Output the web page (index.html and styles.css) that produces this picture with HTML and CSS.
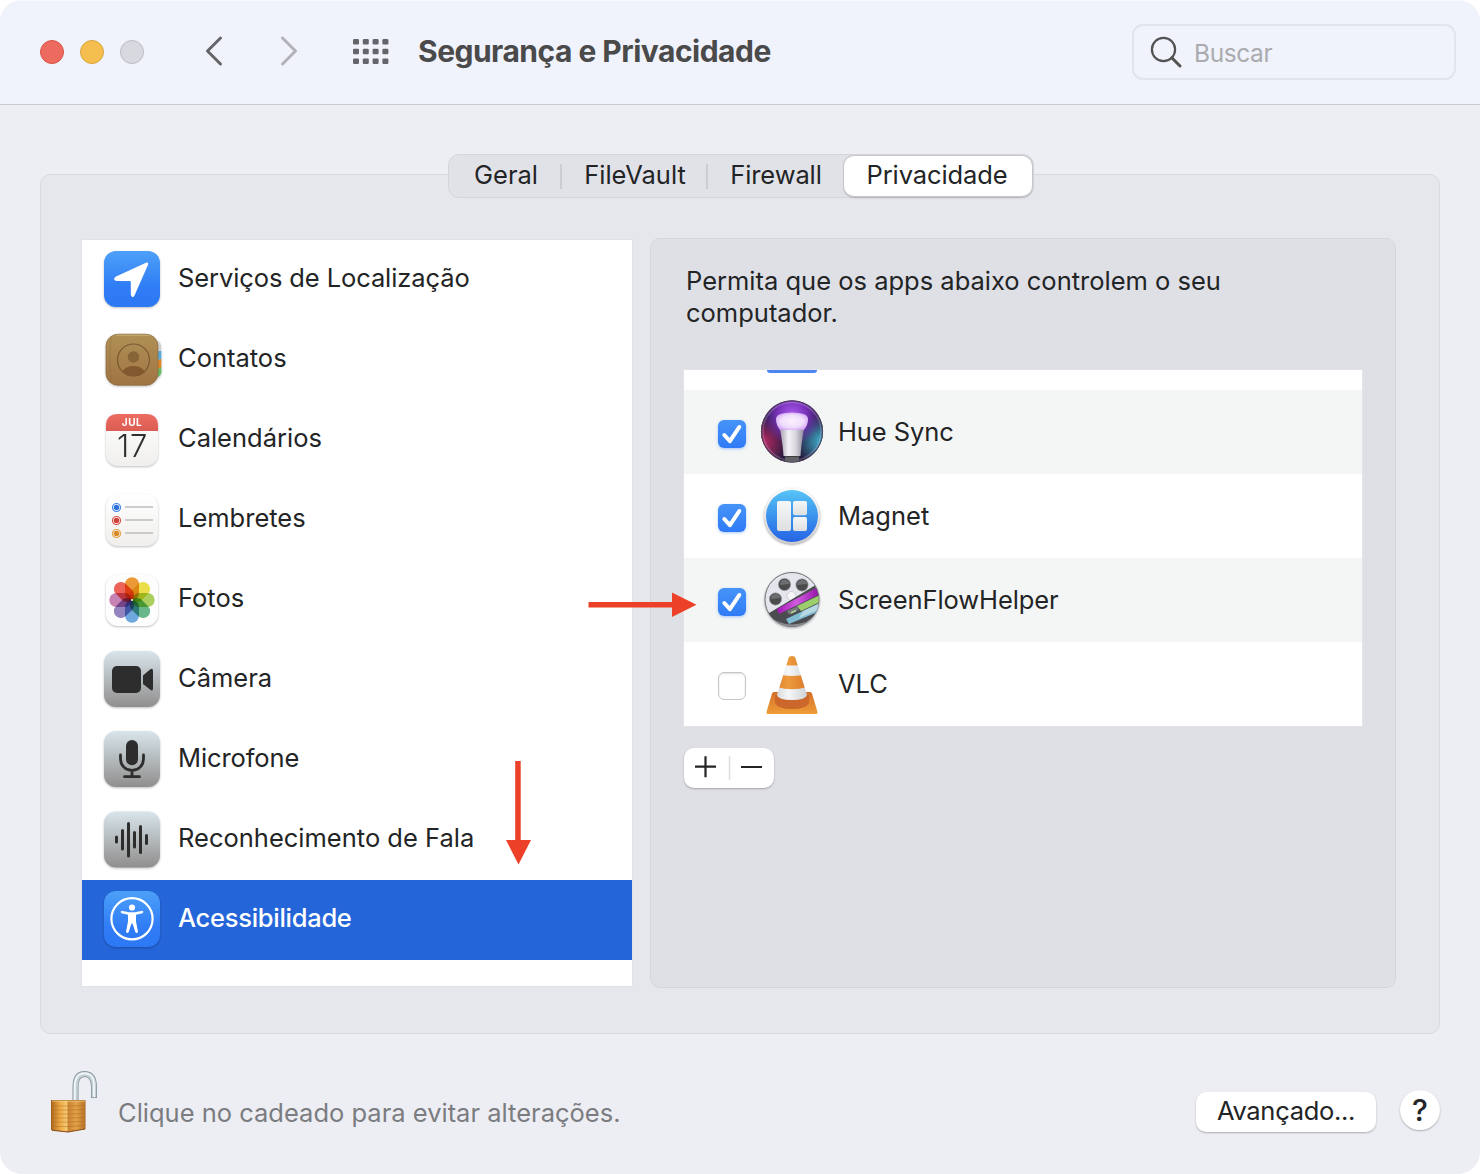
FILE: index.html
```html
<!DOCTYPE html>
<html lang="pt-BR">
<head>
<meta charset="utf-8">
<title>Segurança e Privacidade</title>
<link rel="stylesheet" href="styles.css">
</head>
<body>
<svg class="defs" width="0" height="0" aria-hidden="true">
  <defs>
    <linearGradient id="blue" x1="0" y1="0" x2="0" y2="1"><stop offset="0" stop-color="#4da0f8"/><stop offset=".65" stop-color="#2f7cf6"/><stop offset="1" stop-color="#2d78f4"/></linearGradient>
    <linearGradient id="gray" x1="0" y1="0" x2="0" y2="1"><stop offset="0" stop-color="#d9e5eb"/><stop offset=".5" stop-color="#b4babc"/><stop offset="1" stop-color="#908e8d"/></linearGradient>
    <linearGradient id="paper" x1="0" y1="0" x2="0" y2="1"><stop offset="0" stop-color="#fff"/><stop offset="1" stop-color="#f0efed"/></linearGradient>
    <linearGradient id="leather" x1="0" y1="0" x2="0" y2="1"><stop offset="0" stop-color="#b09055"/><stop offset="1" stop-color="#a07444"/></linearGradient>
    <linearGradient id="calred" x1="0" y1="0" x2="0" y2="1"><stop offset="0" stop-color="#ed6c61"/><stop offset="1" stop-color="#da5c52"/></linearGradient>
    <radialGradient id="hueTop" cx=".5" cy=".22" r=".5"><stop offset="0" stop-color="#a75be8"/><stop offset=".45" stop-color="#7a32bd"/><stop offset="1" stop-color="#7a32bd" stop-opacity="0"/></radialGradient>
    <radialGradient id="hueL" cx=".02" cy=".68" r=".42"><stop offset="0" stop-color="#c02c66"/><stop offset="1" stop-color="#c02c66" stop-opacity="0"/></radialGradient>
    <radialGradient id="hueR" cx=".98" cy=".66" r=".42"><stop offset="0" stop-color="#3fb2cf"/><stop offset="1" stop-color="#3fb2cf" stop-opacity="0"/></radialGradient>
    <radialGradient id="bulb" cx=".5" cy=".5" r=".6"><stop offset="0" stop-color="#fbf1ff"/><stop offset=".6" stop-color="#f0dcfc"/><stop offset="1" stop-color="#c99af0"/></radialGradient>
    <linearGradient id="stem"><stop offset="0" stop-color="#a49fae"/><stop offset=".35" stop-color="#f4f2f7"/><stop offset=".65" stop-color="#d9d6df"/><stop offset="1" stop-color="#8f8a9a"/></linearGradient>
    <linearGradient id="magnet" x1="0" y1="0" x2="0" y2="1"><stop offset="0" stop-color="#58c4f5"/><stop offset=".5" stop-color="#3a93ee"/><stop offset="1" stop-color="#2763e4"/></linearGradient>
    <linearGradient id="rim" x1="0" y1="0" x2="0" y2="1"><stop offset="0" stop-color="#fff"/><stop offset="1" stop-color="#cfcfcf"/></linearGradient>
    <linearGradient id="tile" x1="0" y1="0" x2="0" y2="1"><stop offset="0" stop-color="#f6f7f9"/><stop offset="1" stop-color="#dddfe1"/></linearGradient>
    <linearGradient id="purple"><stop offset="0" stop-color="#a316b4"/><stop offset=".45" stop-color="#d15be0"/><stop offset="1" stop-color="#9312a6"/></linearGradient>
    <linearGradient id="orange"><stop offset="0" stop-color="#e0802e"/><stop offset=".4" stop-color="#ec9a3d"/><stop offset="1" stop-color="#d87427"/></linearGradient>
    <linearGradient id="base" x1="0" y1="0" x2="0" y2="1"><stop offset="0" stop-color="#d3702c"/><stop offset="1" stop-color="#ee9d36"/></linearGradient>
    <linearGradient id="white"><stop offset="0" stop-color="#cfd2d4"/><stop offset=".4" stop-color="#f6f7f8"/><stop offset="1" stop-color="#c8cbce"/></linearGradient>
    <linearGradient id="brassL"><stop offset="0" stop-color="#b0691d"/><stop offset=".5" stop-color="#eba743"/><stop offset="1" stop-color="#f9cf7c"/></linearGradient>
    <linearGradient id="brassR"><stop offset="0" stop-color="#c98330"/><stop offset=".5" stop-color="#e2a14a"/><stop offset="1" stop-color="#b97428"/></linearGradient>
    <clipPath id="reelClip"><circle cx="32" cy="32" r="26.8"/></clipPath>
    <clipPath id="coneClip"><path d="M28.800 3.500Q29.200 2 32 2T35.200 3.500L47 41Q46 46 32 46T17 41Z"/></clipPath>
    <symbol id="check" viewBox="0 0 28 28"><path d="M6.300 15 11.900 21.200 21.300 7" fill="none" stroke="#fff" stroke-width="4" stroke-linecap="round" stroke-linejoin="round"/></symbol>
  </defs>
</svg>

<main class="window">
  <header class="titlebar">
    <div class="lights"><span class="light close"></span><span class="light minimize"></span><span class="light disabled"></span></div>
    <svg class="back" width="20" height="32" viewBox="0 0 20 32"><path d="M16.500 3 3.500 16 16.500 29" fill="none" stroke="#646569" stroke-width="3" stroke-linecap="round" stroke-linejoin="round"/></svg>
    <svg class="forward" width="20" height="32" viewBox="0 0 20 32"><path d="M3.500 3 16.500 16 3.500 29" fill="none" stroke="#b1b3b8" stroke-width="3" stroke-linecap="round" stroke-linejoin="round"/></svg>
    <svg class="grid-icon" width="36" height="26" viewBox="0 0 36 26" fill="#64656a">
      <rect x="0" y="0" width="6" height="5.500" rx="1.200"/><rect x="9.800" y="0" width="6" height="5.500" rx="1.200"/><rect x="19.600" y="0" width="6" height="5.500" rx="1.200"/><rect x="29.400" y="0" width="6" height="5.500" rx="1.200"/>
      <rect x="0" y="9.700" width="6" height="5.500" rx="1.200"/><rect x="9.800" y="9.700" width="6" height="5.500" rx="1.200"/><rect x="19.600" y="9.700" width="6" height="5.500" rx="1.200"/><rect x="29.400" y="9.700" width="6" height="5.500" rx="1.200"/>
      <rect x="0" y="19.400" width="6" height="5.500" rx="1.200"/><rect x="9.800" y="19.400" width="6" height="5.500" rx="1.200"/><rect x="19.600" y="19.400" width="6" height="5.500" rx="1.200"/><rect x="29.400" y="19.400" width="6" height="5.500" rx="1.200"/>
    </svg>
    <h1 class="title">Segurança e Privacidade</h1>
    <div class="search">
      <svg width="34" height="34" viewBox="0 0 34 34" fill="none" stroke="#525252"><circle cx="14.500" cy="14.500" r="11.600" stroke-width="2.200"/><path d="M22.800 22.800 31 31" stroke-width="3" stroke-linecap="round"/></svg>
      <span>Buscar</span>
    </div>
  </header>

  <div class="content">
    <nav class="tabs">
      <span class="tab geral">Geral</span><span class="tab vault">FileVault</span><span class="tab fire">Firewall</span><span class="tab active">Privacidade</span>
    </nav>
    <section class="panel">
      <ul class="sidebar">
        <li><svg viewBox="0 0 64 64"><rect x="4" y="4" width="56" height="56" rx="12" fill="url(#blue)"/><path d="M46 15.700Q49 14.800 48 17.800L34.500 48.500Q32.500 52 30.800 48V34.700Q30.800 34 30 34H17Q12 33.200 15.500 29.800Z" fill="#fff"/></svg><span class="label services">Serviços de Localização</span></li>
        <li><svg viewBox="0 0 64 64"><g transform="translate(0 1)"><path d="M54 12Q61 12 61 19V43Q61 50 54 51Z" fill="#d0d0ce"/><path d="M55 23H61.300V31L55 33Z" fill="#55aadd"/><path d="M55 33 61.300 31V40L55 43Z" fill="#e08427"/><path d="M55 43 61.300 39V45Q60 49 55 50Z" fill="#62bb63"/><rect x="6" y="6.200" width="52" height="51" rx="12" fill="url(#leather)" stroke="#8a683a" stroke-width=".7"/><path d="M11 9Q9 32 11 55" stroke="#8c6b3a" stroke-opacity=".3" fill="none" stroke-width="1.500"/><path d="M16 7.300H50" stroke="#c7aa71"/><circle cx="33.500" cy="32" r="16" fill="none" stroke="#785830" stroke-width="1.200"/><circle cx="33.500" cy="29" r="5.800" fill="#876538"/><path d="M22.500 43.300Q26 38 33.500 38T44.500 43.300Q40 48 33.500 48T22.500 43.300Z" fill="#82592f"/></g></svg><span class="label">Contatos</span></li>
        <li><svg viewBox="0 0 64 64"><g transform="translate(0 1)"><rect x="6" y="6" width="52" height="52" rx="12" fill="url(#paper)"/><path d="M6 23V18Q6 6 18 6H46Q58 6 58 18V23Z" fill="url(#calred)"/><text class="cal-month" x="32" y="18" text-anchor="middle">JUL</text><text class="cal-day" x="32.500" y="49" text-anchor="middle">17</text></g></svg><span class="label">Calendários</span></li>
        <li><svg viewBox="0 0 64 64"><g transform="translate(0 1)"><rect x="6" y="6" width="52" height="52" rx="12" fill="url(#paper)"/><g stroke="#bdbdbd" stroke-width="1.500"><path d="M25 19H53M25 32H53M25 45H53"/></g><g fill="none" stroke-width="1.200"><circle cx="16.500" cy="19.500" r="4" stroke="#4084ec"/><circle cx="16.500" cy="32.500" r="4" stroke="#db4e43"/><circle cx="16.500" cy="45.500" r="4" stroke="#e2a03b"/></g><circle cx="16.500" cy="19.500" r="2.700" fill="#2d70d7"/><circle cx="16.500" cy="32.500" r="2.700" fill="#d0413b"/><circle cx="16.500" cy="45.500" r="2.700" fill="#d98b25"/></g></svg><span class="label">Lembretes</span></li>
        <li><svg viewBox="0 0 64 64"><g transform="translate(0 1)"><rect x="6" y="6" width="52" height="52" rx="12" fill="#fdfdfd"/><g class="petals"><rect x="25" y="9.300" width="14" height="22.700" rx="7" fill="#ee9a37"/><rect x="25" y="9.300" width="14" height="22.700" rx="7" fill="#ede04a" transform="rotate(45 32 32)"/><rect x="25" y="9.300" width="14" height="22.700" rx="7" fill="#aed160" transform="rotate(90 32 32)"/><rect x="25" y="9.300" width="14" height="22.700" rx="7" fill="#69b88a" transform="rotate(135 32 32)"/><rect x="25" y="9.300" width="14" height="22.700" rx="7" fill="#70a9de" transform="rotate(180 32 32)"/><rect x="25" y="9.300" width="14" height="22.700" rx="7" fill="#9484c0" transform="rotate(225 32 32)"/><rect x="25" y="9.300" width="14" height="22.700" rx="7" fill="#c983b6" transform="rotate(270 32 32)"/><rect x="25" y="9.300" width="14" height="22.700" rx="7" fill="#ef6458" transform="rotate(315 32 32)"/></g><circle cx="32" cy="32" r="1" fill="#fff"/></g></svg><span class="label">Fotos</span></li>
        <li><svg viewBox="0 0 64 64"><rect x="4" y="4" width="56" height="56" rx="12" fill="url(#gray)"/><g fill="#2d2d2d"><rect x="12" y="19" width="29" height="27" rx="5"/><path d="M43 28.500 50 22.500Q53 20.500 53 24V41.500Q53 45 50 42.500L43 37Z"/></g></svg><span class="label">Câmera</span></li>
        <li><svg viewBox="0 0 64 64"><rect x="4" y="4" width="56" height="56" rx="12" fill="url(#gray)"/><rect x="26" y="13" width="12" height="25.300" rx="6" fill="#2d2d2d"/><path d="M20.500 28V32A11.500 11.500 0 0 0 43.500 32V28M32 44V49M24.500 49.700H39.500" fill="none" stroke="#2d2d2d" stroke-width="2.800" stroke-linecap="round"/></svg><span class="label mic">Microfone</span></li>
        <li><svg viewBox="0 0 64 64"><rect x="4" y="4.500" width="56" height="56" rx="12" fill="url(#gray)"/><path d="M16.500 30V35M22.500 23.500V42M28.500 16.500V49M34.500 25.500V40M40.500 19.500V45.500M46.500 28.500V36.500" stroke="#2d2d2d" stroke-width="3" stroke-linecap="round"/></svg><span class="label">Reconhecimento de Fala</span></li>
        <li class="selected"><svg viewBox="0 0 64 64"><rect x="4" y="4" width="56" height="56" rx="12" fill="url(#blue)"/><circle cx="32" cy="31.800" r="20.600" fill="none" stroke="#fff" stroke-width="2.200"/><circle cx="32" cy="20.500" r="3.100" fill="#fff"/><path d="M21.500 23.800 29 25.300H35L42.500 23.800Q44.300 25 42.500 26.200L36 27.700V34.500L38 45Q36.500 47 35.300 45L32.500 36.500H31.500L28.700 45Q27.500 47 26 45L28 34.500V27.700L21.500 26.200Q19.700 25 21.500 23.800Z" fill="#fff"/></svg><span class="label">Acessibilidade</span></li>
      </ul>
      <div class="details">
        <p class="prompt"><span>Permita que os apps abaixo controlem o seu</span><br>computador.</p>
        <ul class="apps">
          <li class="partial"><span class="sliver"></span></li>
          <li class="shade"><span class="box on"><svg><use href="#check"/></svg></span>
            <svg class="app" viewBox="0 0 64 64"><circle cx="32" cy="31.500" r="31" fill="#241a3c"/><circle cx="32" cy="31.500" r="31" fill="url(#hueL)"/><circle cx="32" cy="31.500" r="31" fill="url(#hueR)"/><circle cx="32" cy="31.500" r="31" fill="url(#hueTop)"/><circle cx="32" cy="31.500" r="29" fill="none" stroke="#d6b5f0" stroke-opacity=".3" stroke-width="1.300"/><circle cx="32" cy="31.500" r="30.600" fill="none" stroke="#4c4152" stroke-width="1"/><path d="M16 19Q16 12.500 32 12.500T48 19Q48 25 44 30H20Q16 25 16 19Z" fill="url(#bulb)"/><path d="M20.200 30H43.800Q41 46 40.500 56H23.500Q23 46 20.200 30Z" fill="url(#stem)"/><path d="M25 56H39V61Q32 63 25 61Z" fill="#626267"/><path d="M24.500 56.500H39.500" stroke="#3f3e43"/></svg>
            <span class="label hue">Hue Sync</span></li>
          <li><span class="box on"><svg><use href="#check"/></svg></span>
            <svg class="app" viewBox="0 0 64 64"><circle class="soft" cx="32" cy="32" r="28" fill="url(#rim)"/><circle cx="32" cy="32" r="26" fill="url(#magnet)"/><g fill="url(#tile)"><rect x="17" y="17" width="14" height="30" rx="2"/><rect x="33" y="17" width="14" height="14.300" rx="2"/><rect x="33" y="33" width="14" height="14" rx="2"/></g></svg>
            <span class="label">Magnet</span></li>
          <li class="shade"><span class="box on"><svg><use href="#check"/></svg></span>
            <svg class="app" viewBox="0 0 64 64"><circle class="soft" cx="32" cy="31.500" r="27.500" fill="#d8d9df"/><circle cx="32" cy="31.500" r="27" fill="#e5e6ed" stroke="#66676b" stroke-width=".9"/><g clip-path="url(#reelClip)"><circle cx="31.500" cy="28" r="4.500" fill="#f6f6f8" stroke="#babbc2" stroke-width=".6"/><path d="M4 48 64 12V64H4Z" fill="#4b4c50"/><path d="M17 41 60 18V26L19 46Z" fill="url(#purple)"/><path d="M37 38 60 27V34L41 43Z" fill="#9dce6d"/><path d="M27 43 37 38.500 39 42 29 46.500Z" fill="#77797c"/><path d="M31 45 36 42.500" stroke="#b2d995" stroke-width="1.500"/><path d="M26 51 60 35V43L29 56Z" fill="#80bcd2"/><path d="M43 43 60 35V41L39 50Z" fill="#b6d8e3"/><path d="M9 48Q25 61 46 54L55 47V64H9Z" fill="#b6b7bb" opacity=".6"/></g><g fill="#4b4b4d" stroke="#adb0b9" stroke-width=".7"><circle cx="24.500" cy="16.500" r="6.200"/><circle cx="42" cy="17" r="6.200"/><circle cx="15.500" cy="31" r="6.200"/></g><g fill="#85868a" opacity=".6"><path d="M20 17Q20 12 24.500 11.500Q29 12 29.500 16Z"/><path d="M37 17Q38 12 42 12Q46 12 47 16Z"/><path d="M11 31Q11 26 15.500 26Q20 26 20.500 30Z"/></g></svg>
            <span class="label helper">ScreenFlowHelper</span></li>
          <li><span class="box"></span>
            <svg class="app cone" viewBox="0 0 64 64"><path d="M12 39.500Q12.300 38 14 38H50Q51.700 38 52 39.500L57.500 58Q58 60 56 60H8Q6 60 6.500 58Z" fill="url(#base)"/><path d="M15 41V49Q18 55 32 55T49 49V41Z" fill="#cb672b"/><g clip-path="url(#coneClip)"><path d="M14 0H50V48H14Z" fill="url(#white)"/><path d="M14 0H50V10Q32 13 14 10Z" fill="url(#orange)"/><path d="M14 19Q32 25 50 19V32Q32 38.500 14 32Z" fill="url(#orange)"/></g></svg>
            <span class="label">VLC</span></li>
        </ul>
        <div class="plusminus">
          <svg viewBox="0 0 90 40" width="90" height="40"><path d="M11 18.700H32M21.500 8.200V29.200M57 19H78" stroke="#242424" stroke-width="2.200"/><path d="M45.500 8V32" stroke="#dedede" stroke-width="1.500"/></svg>
        </div>
      </div>
    </section>
  </div>

  <footer class="footer">
    <svg class="lock" width="50" height="66" viewBox="0 0 50 66"><path d="M25.500 31V17Q25.500 4 34.500 4T44 16V28" fill="none" stroke="#82909a" stroke-width="6"/><path d="M25.500 31V17Q25.500 4 34.500 4T44 16V27.300" fill="none" stroke="#c3d0d6" stroke-width="4.500"/><path d="M24.800 31V17Q24.800 3.300 34.500 3.300T44 16V27" fill="none" stroke="#f3f7f9" stroke-width="1.700"/><path d="M1 30H35.500V59L18 62 1 60Z" fill="#9a5a18"/><path d="M1.500 31H18V61.500L1.500 60Z" fill="url(#brassL)"/><path d="M17.500 31H35V59L17.500 61.500Z" fill="url(#brassR)"/><path d="M2 36H18L34.500 35.500M2 40H18L34.500 39.500M2 44H18L34.500 43.500M2 48H18L34.500 47.500M2 52H18L34.500 51.500M2 56.500H18L34.500 55.500" fill="none" stroke="#a8651d" stroke-opacity=".45" stroke-width="1"/><path d="M2 31H35.300" stroke="#ffdc94" stroke-width=".8"/><path d="M2 60.300 18 62 35 59" fill="none" stroke="#8d4e18"/></svg>
    <span class="hint">Clique no cadeado para evitar alterações.</span>
    <button class="advanced">Avançado...</button>
    <button class="help">?</button>
  </footer>

  <svg class="arrow-right" width="110" height="26" viewBox="0 0 110 26" fill="#ec4128"><path d="M.5 10H84V.5L108.500 12.800 84 25V15.500H.5Z"/></svg>
  <svg class="arrow-down" width="26" height="106" viewBox="0 0 26 106" fill="#ec4128"><path d="M9.200 0H14.700V79H25L12.500 103.500 0 79H9.200Z"/></svg>
</main>
</body>
</html>
```
FILE: styles.css
```css
* { box-sizing: border-box; }
body { margin: 0; background: #fff; font-family: Inter, "Liberation Sans", sans-serif; font-size: 25.5px; color: #232425; line-height: 32px; }
ul { list-style: none; margin: 0; padding: 0; }
svg { display: block; flex: none; }
.defs { position: absolute; }
.window { position: relative; width: 1480px; height: 1174px; border-radius: 22px; overflow: hidden; background: #edeef4; display: flex; flex-direction: column; white-space: nowrap; }

.titlebar { height: 105px; background: #f0f3fb; border-top: 1px solid #f7f9fc; border-bottom: 1px solid #c8cacf; display: flex; align-items: flex-start; padding: 0 24px 0 40px; flex: none; }
.lights { display: flex; gap: 16px; padding-top: 39px; }
.light { width: 24px; height: 24px; border-radius: 50%; border: 1px solid; }
.close { background: #ed6a5e; border-color: #d95247; }
.minimize { background: #f5bf4f; border-color: #dba33c; }
.disabled { background: #d7d9de; border-color: #babdc4; }
.back { margin: 34px 0 0 60px; }
.forward { margin: 34px 0 0 55px; }
.grid-icon { margin: 38px 0 0 54px; }
.title { margin: 34px 0 0 29px; font-size: 30px; font-weight: 650; color: #4a4a4b; letter-spacing: -.51px; }
.search { margin: 23px 0 0 auto; width: 324px; height: 56px; border: 2px solid #e2e4ec; border-radius: 11px; display: flex; align-items: center; gap: 11px; padding: 0 0 0 15px; color: #ababaf; font-size: 24.500px; }
.search span { padding-top: 2px; letter-spacing: -.4px; }

.content { padding: 49px 40px 0; display: flex; flex-direction: column; align-items: center; flex: none; }
.tabs { width: 586px; height: 44px; margin: 0 0 -24px 2px; background: #e1e2e8; border: 1px solid #d5d6dc; border-radius: 11px; z-index: 1; display: flex; padding-top: 1px; }
.tab { height: 40px; line-height: 38px; text-align: center; position: relative; }
.geral { width: 113px; padding-left: 1px; }
.vault { width: 146px; }
.fire { width: 136px; letter-spacing: -.1px; }
.geral::after, .vault::after { content: ""; position: absolute; right: 0; top: 8px; height: 25px; width: 2px; background: #cccdd3; }
.active { width: 188px; padding-right: 2px; letter-spacing: -.1px; border-radius: 10px; background: #fff; box-shadow: 0 0 1px 1px #c6c7cd, 0 2px 2px rgba(0,0,0,.18); }
.panel { width: 1400px; height: 860px; border: 1px solid #d9dadf; border-radius: 10px; background: #e6e7ec; display: flex; align-items: flex-start; padding: 63px 43px 0 41px; gap: 18px; }
.sidebar { width: 550px; height: 746px; margin-top: 2px; background: #fff; box-shadow: 0 0 0 1px #e2e2e6; }
.sidebar li { height: 80px; display: flex; align-items: center; padding: 0 0 4px 18px; gap: 14px; }
.sidebar li > svg { width: 64px; height: 64px; margin-top: 2px; filter: drop-shadow(0 1px 1px rgba(0,0,0,.25)); }
.services { letter-spacing: -.1px; }
.mic { letter-spacing: -.1px; }
.selected { background: #2465d9; color: #fff; font-weight: 500; letter-spacing: -.28px; }
.cal-month { font-size: 10px; font-weight: 700; fill: #fff; letter-spacing: .5px; }
.cal-day { font-size: 31px; font-weight: 300; fill: #303030; letter-spacing: .8px; }
.petals { mix-blend-mode: multiply; }
.petals rect { mix-blend-mode: multiply; }

.details { width: 746px; height: 750px; background: #dfe0e6; border: 1px solid #d4d5db; border-radius: 10px; padding: 26px 33px 0; }
.prompt { margin: 0 0 41px 2px; }
.apps { width: 678px; height: 356px; background: #fff; box-shadow: 0 0 0 1px #e4e4e8; }
.apps li { height: 84px; display: flex; align-items: center; padding-left: 34px; }
.apps .partial { height: 20px; align-items: flex-start; padding-left: 83px; }
.sliver { width: 50px; height: 3px; background: #4b85ef; border-radius: 0 0 4px 4px; }
.apps .shade { background: #f4f6f6; }
.hue, .helper { letter-spacing: -.08px; }
.box { width: 28px; height: 28px; margin-top: 4px; border-radius: 6px; border: 1.500px solid #c6c6c6; background: #fff; box-shadow: inset 0 1px 2px rgba(0,0,0,.12); }
.box.on { border: 0; background: linear-gradient(#4694f8, #2f7bf6); box-shadow: 0 1px 3px rgba(47,123,246,.4); }
.box svg { width: 28px; height: 28px; }
.app { width: 64px; height: 64px; margin: 0 14px; }
.cone { margin-top: 4px; }
.soft { filter: drop-shadow(0 1px 1px rgba(0,0,0,.35)); }
.plusminus { width: 90px; height: 40px; margin-top: 22px; border-radius: 10px; background: #fff; box-shadow: 0 1px 2px rgba(0,0,0,.28); }

.footer { display: flex; align-items: flex-start; padding: 36px 40px 0 50px; }
.hint { margin: 27px 0 0 18px; color: #7b7c80; }
button { font: inherit; color: inherit; border: 0; padding: 0; background: #fff; box-shadow: 0 1px 2px rgba(0,0,0,.28); }
.advanced { margin: 22px 0 0 auto; width: 180px; height: 40px; border-radius: 10px; line-height: 38px; padding-bottom: 2px; letter-spacing: -.3px; }
.help { margin: 20px 0 0 24px; width: 40px; height: 40px; border-radius: 50%; font-size: 30px; font-weight: 500; line-height: 40px; }
.arrow-right { position: absolute; left: 588px; top: 592px; }
.arrow-down { position: absolute; left: 506px; top: 761px; }
```
